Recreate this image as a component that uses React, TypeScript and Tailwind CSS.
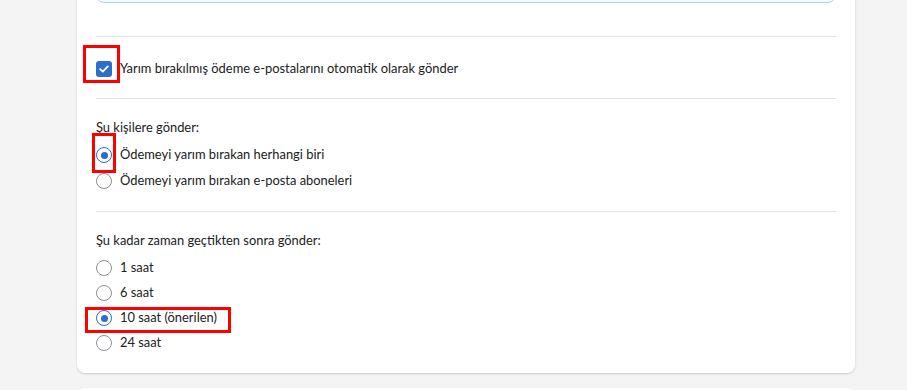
import React from 'react';

const font = { fontFamily: 'Lato, "Noto Sans", sans-serif' };

function Checkbox() {
  return (
    <span className="flex h-4 w-4 shrink-0 items-center justify-center rounded-[3px] bg-[#2c6ecb]">
      <svg width="10" height="8" viewBox="0 0 10 8" fill="none">
        <path d="M1.2 4.2 3.8 6.6 8.8 1.4" stroke="white" strokeWidth="1.8" strokeLinecap="round" strokeLinejoin="round" />
      </svg>
    </span>
  );
}

function Radio({ checked }: { checked?: boolean }) {
  return (
    <span
      className={
        checked
          ? 'flex h-4 w-4 shrink-0 items-center justify-center rounded-full border-[1.5px] border-[#2c6ecb] bg-white'
          : 'flex h-4 w-4 shrink-0 items-center justify-center rounded-full border border-[#8c9196] bg-white'
      }
    >
      {checked && <span className="h-[7px] w-[7px] rounded-full bg-[#2c6ecb]" />}
    </span>
  );
}

function RadioRow({ label, checked }: { label: string; checked?: boolean }) {
  return (
    <label className="flex h-5 items-center gap-2">
      <Radio checked={checked} />
      <span>{label}</span>
    </label>
  );
}

const Mark = ({ className }: { className: string }) => (
  <div className={'pointer-events-none absolute border-[3px] border-[#ff0000] ' + className} />
);

export default function App() {
  return (
    <div className="relative h-[390px] overflow-hidden bg-[#f4f4f4] text-[12.9px] text-[#202223]" style={font}>
      <div className="ml-[77px] w-[778px] rounded-b-lg bg-white px-[19px] shadow-[0_1px_2px_rgba(0,0,0,0.18)]">
        <div className="-mt-[30px] h-[33px] rounded-lg border border-[#a4dbe3] bg-[#f4fbfc]" />
        <div className="h-[33px]" />
        <div className="border-t border-[#e1e3e5] pt-[22px] pb-[19px]">
          <label className="flex h-5 items-center gap-2">
            <Checkbox />
            <span>Yarım bırakılmış ödeme e-postalarını otomatik olarak gönder</span>
          </label>
        </div>
        <div className="border-t border-[#e1e3e5] pt-[18px] pb-[20px]">
          <div className="h-5 leading-5">Şu kişilere gönder:</div>
          <div className="mt-2 flex flex-col gap-[6px]">
            <RadioRow label="Ödemeyi yarım bırakan herhangi biri" checked />
            <RadioRow label="Ödemeyi yarım bırakan e-posta aboneleri" />
          </div>
        </div>
        <div className="border-t border-[#e1e3e5] pt-[18px] pb-[20px]">
          <div className="h-5 leading-5">Şu kadar zaman geçtikten sonra gönder:</div>
          <div className="mt-2 flex flex-col gap-[5px]">
            <RadioRow label="1 saat" />
            <RadioRow label="6 saat" />
            <RadioRow label="10 saat (önerilen)" checked />
            <RadioRow label="24 saat" />
          </div>
        </div>
      </div>
      <div className="ml-[77px] mt-[15px] h-10 w-[778px] rounded-t-lg bg-white shadow-[0_1px_2px_rgba(0,0,0,0.18)]" />

      <Mark className="left-[83px] top-[45px] h-[38px] w-[37px]" />
      <Mark className="left-[92px] top-[133px] h-[40px] w-[24px]" />
      <Mark className="left-[85px] top-[307px] h-[26px] w-[146px]" />
    </div>
  );
}
